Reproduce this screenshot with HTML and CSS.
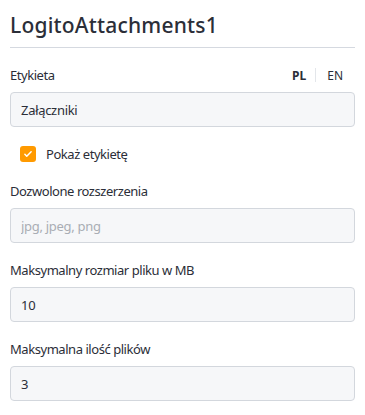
FILE: index.html
```html
<!DOCTYPE html>
<html lang="pl">

<head>
    <meta charset="UTF-8">
    <meta name="viewport" content="width=device-width, initial-scale=1.0">
    <title>LogitoAttachments1</title>
    <link rel="stylesheet" href="styles.css">
</head>

<body>
    <div class="panel">
        <h1 class="panel-title">LogitoAttachments1</h1>

        <!-- label with language switch -->
        <div class="field">
            <div class="field-head">
                <label class="field-label" for="label">Etykieta</label>
                <div class="lang">
                    <span class="lang-item active">PL</span>
                    <span class="lang-sep"></span>
                    <span class="lang-item">EN</span>
                </div>
            </div>
            <input class="field-input" id="label" type="text" value="Załączniki">
        </div>

        <label class="check">
            <input type="checkbox" checked>
            <span class="check-box">
                <svg viewBox="0 0 16 16" width="10" height="10">
                    <path d="M3 8.5l3 3 7-7" fill="none" stroke="#fff" stroke-width="2.4" stroke-linecap="round" stroke-linejoin="round" />
                </svg>
            </span>
            <span class="check-text">Pokaż etykietę</span>
        </label>

        <div class="field">
            <label class="field-label" for="ext">Dozwolone rozszerzenia</label>
            <input class="field-input" id="ext" type="text" placeholder="jpg, jpeg, png">
        </div>

        <div class="field">
            <label class="field-label" for="size">Maksymalny rozmiar pliku w MB</label>
            <input class="field-input" id="size" type="text" value="10">
        </div>

        <div class="field">
            <label class="field-label" for="count">Maksymalna ilość plików</label>
            <input class="field-input" id="count" type="text" value="3">
        </div>
    </div>
</body>

</html>
```

FILE: styles.css
```css
body {
    font-family: "Noto Sans", "Open Sans", sans-serif;
    color: #2b2e38;
    margin: 0;
    background: #fff;
}

.panel {
    padding: 10px 10px 0 10px;
}

.panel-title {
    font-size: 21px;
    font-weight: 500;
    letter-spacing: 0.2px;
    margin: 0;
    padding: 3px 0 10px 0;
    border-bottom: 1px solid #d5d9e0;
    line-height: 24px;
}

.field {
    margin-top: 17px;
}

.check + .field {
    margin-top: 18px;
}

.field-head {
    display: flex;
    justify-content: space-between;
    align-items: center;
}

.field-label {
    display: block;
    font-size: 13px;
    letter-spacing: -0.45px;
    line-height: 20px;
    margin-bottom: 7px;
}

.lang {
    display: flex;
    align-items: center;
    font-size: 12px;
    margin-bottom: 7px;
    margin-right: 10px;
}

.lang-item {
    padding: 0 2px;
}

.lang-item.active {
    font-weight: 700;
}

.lang-sep {
    width: 1px;
    height: 14px;
    background: #e3e6ea;
    margin: 0 9px 0 7px;
}

.field-input {
    display: block;
    box-sizing: border-box;
    width: 100%;
    height: 35px;
    padding: 0 10px;
    font-family: inherit;
    font-size: 13px;
    letter-spacing: -0.3px;
    color: #2b2e38;
    background: #f6f7f9;
    border: 1px solid #d3d7dd;
    border-radius: 4px;
}

.field-input::placeholder {
    color: #a9adb4;
}

.check {
    display: flex;
    align-items: center;
    margin: 18px 0 0 10px;
    font-size: 13px;
    letter-spacing: -0.45px;
}

.check input {
    display: none;
}

.check-box {
    width: 16px;
    height: 16px;
    border-radius: 3px;
    background: #ff9a00;
    display: flex;
    align-items: center;
    justify-content: center;
}

.check-text {
    margin-left: 10px;
}
```
